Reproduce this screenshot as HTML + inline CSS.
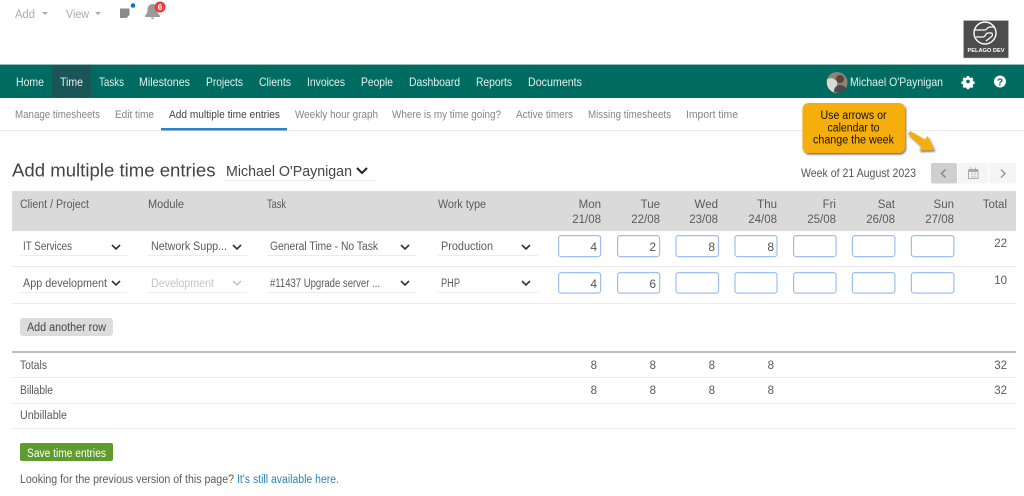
<!DOCTYPE html>
<html><head><meta charset="utf-8"><title>Add multiple time entries</title>
<style>
html,body{margin:0;padding:0;background:#fff;width:1024px;height:496px;overflow:hidden}
svg{display:block;filter:blur(.35px)}
text{font-family:"Liberation Sans",sans-serif;font-size:11.5px;fill:#5a5a5a}
.n{fill:#e4f0ee;font-size:12px}
.s{fill:#858585;font-size:11px}
.r{text-anchor:end}
.f{fill:#fff;stroke:#9cc0f0;stroke-width:1.2}
.c{fill:none;stroke:#333;stroke-width:1.6}
.u{stroke:#ececec;stroke-width:1}
.v{fill:#555;font-size:12px;text-anchor:end}
</style></head><body>
<svg width="1024" height="496" viewBox="0 0 1024 496" xmlns="http://www.w3.org/2000/svg">
<defs><filter id="sh" x="-20%" y="-20%" width="140%" height="140%"><feDropShadow dx="1" dy="1.5" stdDeviation="1" flood-color="#000" flood-opacity=".6"/></filter></defs>
<rect width="1024" height="496" fill="#fff"/>

<!-- top bar -->
<text x="15" y="18" textLength="20" lengthAdjust="spacingAndGlyphs" style="fill:#aaa">Add</text>
<path d="M42 12h6l-3 3z" fill="#aaa"/>
<text x="66" y="18" textLength="23" lengthAdjust="spacingAndGlyphs" style="fill:#aaa">View</text>
<path d="M95 12h6l-3 3z" fill="#aaa"/>
<path d="M120 8.500h9.500v6.500l-3 3h-6.500z" fill="#8a8a8a"/>
<circle cx="133" cy="5.500" r="2.300" fill="#0b74c4"/>
<path d="M152.500 4c3.500 0 5 3 5 6 0 3 1 4.500 2.500 5.500v1.500h-15v-1.500c1.500-1 2.500-2.500 2.500-5.500 0-3 1.500-6 5-6zM150.500 17.500h4l-2 2z" fill="#9a9a9a"/>
<circle cx="160" cy="7" r="5.500" fill="#ef3b3b"/>
<text x="160" y="10" text-anchor="middle" style="fill:#fff;font-size:8.500px;font-weight:bold">6</text>

<!-- logo -->
<rect x="963.500" y="20.500" width="45" height="37.500" fill="#4d4d4d" stroke="#bbb" stroke-width=".6"/>
<circle cx="985" cy="33" r="11" fill="none" stroke="#fff" stroke-width="1.400"/>
<path d="M975 30h10c2 0 2-3 5-3h5M976 37h7c3 0 2-4 5-4h3c2 0 2 3 0 4l-5 4" fill="none" stroke="#fff" stroke-width="1.200"/>
<text x="986" y="52" text-anchor="middle" textLength="37" lengthAdjust="spacingAndGlyphs" style="fill:#fff;font-size:5px;font-weight:bold">PELAGO DEV</text>

<!-- nav -->
<rect x="0" y="64" width="1024" height="1" fill="#8fbdb6"/>
<rect x="0" y="65" width="1024" height="33" fill="#006b60"/>
<rect x="52" y="65" width="39" height="32.500" fill="#1a5558"/>
<text class="n" x="16" y="86" textLength="28" lengthAdjust="spacingAndGlyphs">Home</text>
<text class="n" x="60" y="86" textLength="23" lengthAdjust="spacingAndGlyphs">Time</text>
<text class="n" x="99" y="86" textLength="25" lengthAdjust="spacingAndGlyphs">Tasks</text>
<text class="n" x="139" y="86" textLength="51" lengthAdjust="spacingAndGlyphs">Milestones</text>
<text class="n" x="206" y="86" textLength="37" lengthAdjust="spacingAndGlyphs">Projects</text>
<text class="n" x="259" y="86" textLength="32" lengthAdjust="spacingAndGlyphs">Clients</text>
<text class="n" x="307" y="86" textLength="38" lengthAdjust="spacingAndGlyphs">Invoices</text>
<text class="n" x="361" y="86" textLength="32" lengthAdjust="spacingAndGlyphs">People</text>
<text class="n" x="409" y="86" textLength="51" lengthAdjust="spacingAndGlyphs">Dashboard</text>
<text class="n" x="476" y="86" textLength="36" lengthAdjust="spacingAndGlyphs">Reports</text>
<text class="n" x="528" y="86" textLength="54" lengthAdjust="spacingAndGlyphs">Documents</text>

<circle cx="837" cy="82.500" r="10.500" fill="#8d8479"/>
<path d="M827 84a10.500 10.500 0 0 0 10 9v-12l-5-3-5 1z" fill="#d8d8d4"/>
<circle cx="840" cy="79" r="4" fill="#5c4436"/>
<path d="M834 92c0-5 3-7 6-7s6 2 6 4a10.500 10.500 0 0 1-12 3z" fill="#4c4a50"/>
<text class="n" x="850" y="86" textLength="93" lengthAdjust="spacingAndGlyphs">Michael O'Paynigan</text>

<g transform="translate(968 81.500) scale(.78)"><path d="M-1.500-7h3l.4 1.900 1.400.6 1.600-1 2.100 2.100-1 1.600.6 1.400 1.900.4v3l-1.900.4-.6 1.400 1 1.600-2.100 2.100-1.600-1-1.400.6-.4 1.900h-3l-.4-1.900-1.400-.6-1.600 1-2.100-2.100 1-1.600-.6-1.400-1.900-.4v-3l1.900-.4.6-1.400-1-1.600 2.100-2.100 1.600 1 1.400-.6z" fill="#fff"/><circle r="2.300" fill="#006b60"/></g>
<circle cx="1000" cy="81.500" r="6" fill="#fff"/>
<text x="1000" y="85.500" text-anchor="middle" style="fill:#006b60;font-size:10px;font-weight:bold">?</text>

<!-- sub nav -->
<rect x="0" y="130" width="1024" height="1" fill="#ececec"/>
<text class="s" x="15" y="118" textLength="85" lengthAdjust="spacingAndGlyphs">Manage timesheets</text>
<text class="s" x="115" y="118" textLength="39" lengthAdjust="spacingAndGlyphs">Edit time</text>
<text class="s" x="169" y="118" textLength="111" lengthAdjust="spacingAndGlyphs" style="fill:#444">Add multiple time entries</text>
<text class="s" x="295" y="118" textLength="83" lengthAdjust="spacingAndGlyphs">Weekly hour graph</text>
<text class="s" x="392" y="118" textLength="109" lengthAdjust="spacingAndGlyphs">Where is my time going?</text>
<text class="s" x="516" y="118" textLength="57" lengthAdjust="spacingAndGlyphs">Active timers</text>
<text class="s" x="588" y="118" textLength="83" lengthAdjust="spacingAndGlyphs">Missing timesheets</text>
<text class="s" x="686" y="118" textLength="52" lengthAdjust="spacingAndGlyphs">Import time</text>
<rect x="161" y="128" width="126" height="2.500" fill="#2a85c0"/>

<!-- callout -->
<rect x="802.500" y="103" width="102.500" height="50" rx="6" fill="#f6ae0a" filter="url(#sh)"/>
<path d="M908 134l2-3 15 8.500 2.500-3.500 7 14-15.500 .5 2.500-4z" fill="#f6ae0a" filter="url(#sh)"/>
<text x="853.500" y="119" text-anchor="middle" textLength="66" lengthAdjust="spacingAndGlyphs" style="fill:#111">Use arrows or</text>
<text x="853.500" y="131.500" text-anchor="middle" textLength="52" lengthAdjust="spacingAndGlyphs" style="fill:#111">calendar to</text>
<text x="853.500" y="143.500" text-anchor="middle" textLength="81" lengthAdjust="spacingAndGlyphs" style="fill:#111">change the week</text>

<!-- title row -->
<text x="12" y="176.500" textLength="203.500" lengthAdjust="spacingAndGlyphs" style="font-size:18.500px;fill:#444">Add multiple time entries</text>
<text x="226" y="176" textLength="126" lengthAdjust="spacingAndGlyphs" style="font-size:14.500px;fill:#444">Michael O'Paynigan</text>
<path d="M357 168l5 5 5-5" fill="none" stroke="#222" stroke-width="2"/>
<path class="u" d="M223 180.500h154"/>

<text x="801" y="177" textLength="115" lengthAdjust="spacingAndGlyphs" style="font-size:12px;fill:#555">Week of 21 August 2023</text>
<rect x="931" y="163" width="26" height="20.500" rx="2" fill="#cfcfcf"/>
<rect x="958" y="163" width="30" height="20.500" rx="2" fill="#f5f5f5"/>
<rect x="989" y="163" width="27" height="20.500" rx="2" fill="#f5f5f5"/>
<path d="M945.500 169.500l-4 4 4 4" fill="none" stroke="#888" stroke-width="1.500"/>
<path d="M1001 169.500l4 4-4 4" fill="none" stroke="#999" stroke-width="1.500"/>
<rect x="968.500" y="170" width="9.500" height="8.500" fill="none" stroke="#aaa" stroke-width="1"/>
<rect x="968.500" y="169" width="9.500" height="3" fill="#aaa"/>
<path d="M971 167.500v2M975.500 167.500v2" stroke="#aaa" stroke-width="1"/>
<path d="M970.500 174h6M970.500 176.500h6M972 172v6M975 172v6" stroke="#bbb" stroke-width=".6"/>

<!-- table header -->
<rect x="12" y="191" width="1004" height="40" fill="#dadada"/>
<text x="20" y="208" textLength="69" lengthAdjust="spacingAndGlyphs">Client / Project</text>
<text x="148" y="208" textLength="36" lengthAdjust="spacingAndGlyphs">Module</text>
<text x="267" y="208" textLength="19" lengthAdjust="spacingAndGlyphs">Task</text>
<text x="438" y="208" textLength="48" lengthAdjust="spacingAndGlyphs">Work type</text>
<text class="r" x="601" y="208">Mon</text><text class="r" x="601" y="223">21/08</text>
<text class="r" x="660" y="208">Tue</text><text class="r" x="660" y="223">22/08</text>
<text class="r" x="718" y="208">Wed</text><text class="r" x="718" y="223">23/08</text>
<text class="r" x="777" y="208">Thu</text><text class="r" x="777" y="223">24/08</text>
<text class="r" x="836" y="208">Fri</text><text class="r" x="836" y="223">25/08</text>
<text class="r" x="895" y="208">Sat</text><text class="r" x="895" y="223">26/08</text>
<text class="r" x="954" y="208">Sun</text><text class="r" x="954" y="223">27/08</text>
<text class="r" x="1007" y="208">Total</text>

<!-- row 1 -->
<text x="23" y="250" textLength="49" lengthAdjust="spacingAndGlyphs">IT Services</text>
<text x="151" y="250" textLength="76" lengthAdjust="spacingAndGlyphs">Network Supp...</text>
<text x="270" y="250" textLength="108" lengthAdjust="spacingAndGlyphs">General Time - No Task</text>
<text x="441" y="250" textLength="52" lengthAdjust="spacingAndGlyphs">Production</text>
<path class="c" d="M112 245l4 4 4-4M233 245l4 4 4-4M401 245l4 4 4-4M522 245l4 4 4-4"/>
<path class="u" d="M20 255.500h107M148 255.500h99M267 255.500h149M438 255.500h100M12 266.500h1004"/>
<rect class="f" x="558.600" y="235.600" width="42" height="21" rx="2.500"/>
<rect class="f" x="617.600" y="235.600" width="42" height="21" rx="2.500"/>
<rect class="f" x="676" y="235.600" width="42.500" height="21" rx="2.500"/>
<rect class="f" x="735" y="235.600" width="42" height="21" rx="2.500"/>
<rect class="f" x="793.600" y="235.600" width="42.500" height="21" rx="2.500"/>
<rect class="f" x="852.400" y="235.600" width="42.500" height="21" rx="2.500"/>
<rect class="f" x="911.400" y="235.600" width="42.500" height="21" rx="2.500"/>
<text class="v" x="597" y="251">4</text>
<text class="v" x="656" y="251">2</text>
<text class="v" x="715" y="251">8</text>
<text class="v" x="774" y="251">8</text>
<text class="r" x="1007" y="247">22</text>

<!-- row 2 -->
<text x="23" y="287" textLength="84" lengthAdjust="spacingAndGlyphs">App development</text>
<text x="151" y="287" textLength="63" lengthAdjust="spacingAndGlyphs" style="fill:#c4c4c4">Development</text>
<text x="270" y="287" textLength="110" lengthAdjust="spacingAndGlyphs">#11437 Upgrade server ...</text>
<text x="441" y="287" textLength="19" lengthAdjust="spacingAndGlyphs">PHP</text>
<path class="c" d="M112 281l4 4 4-4M401 281l4 4 4-4M522 281l4 4 4-4"/>
<path d="M233 281l4 4 4-4" fill="none" stroke="#bbb" stroke-width="1.300"/>
<path class="u" d="M20 292.500h107M148 292.500h99M267 292.500h149M438 292.500h100M12 303.500h1004"/>
<rect class="f" x="558.600" y="272.600" width="42" height="20.500" rx="2.500"/>
<rect class="f" x="617.600" y="272.600" width="42" height="20.500" rx="2.500"/>
<rect class="f" x="676" y="272.600" width="42.500" height="20.500" rx="2.500"/>
<rect class="f" x="735" y="272.600" width="42" height="20.500" rx="2.500"/>
<rect class="f" x="793.600" y="272.600" width="42.500" height="20.500" rx="2.500"/>
<rect class="f" x="852.400" y="272.600" width="42.500" height="20.500" rx="2.500"/>
<rect class="f" x="911.400" y="272.600" width="42.500" height="20.500" rx="2.500"/>
<text class="v" x="597" y="288">4</text>
<text class="v" x="656" y="288">6</text>
<text class="r" x="1007" y="284">10</text>

<!-- add row -->
<rect x="20" y="318" width="93" height="18" rx="3" fill="#dcdcdc"/>
<text x="27" y="331" textLength="79" lengthAdjust="spacingAndGlyphs" style="fill:#444">Add another row</text>

<!-- totals -->
<rect x="12" y="351" width="1004" height="2" fill="#bdbdbd"/>
<text x="20" y="369" textLength="27" lengthAdjust="spacingAndGlyphs">Totals</text>
<text class="r" x="597" y="369">8</text><text class="r" x="656" y="369">8</text><text class="r" x="715" y="369">8</text><text class="r" x="774" y="369">8</text><text class="r" x="1007" y="369">32</text>
<path class="u" d="M12 377.500h1004"/>
<text x="20" y="394" textLength="33" lengthAdjust="spacingAndGlyphs">Billable</text>
<text class="r" x="597" y="394">8</text><text class="r" x="656" y="394">8</text><text class="r" x="715" y="394">8</text><text class="r" x="774" y="394">8</text><text class="r" x="1007" y="394">32</text>
<path class="u" d="M12 403.500h1004"/>
<text x="20" y="419" textLength="47" lengthAdjust="spacingAndGlyphs">Unbillable</text>
<path class="u" d="M12 428.500h1004"/>

<!-- footer -->
<rect x="20" y="443" width="93" height="18" rx="2" fill="#5f9b2e"/>
<text x="27" y="457" textLength="79" lengthAdjust="spacingAndGlyphs" style="fill:#fff">Save time entries</text>
<text x="20" y="483" textLength="214" lengthAdjust="spacingAndGlyphs">Looking for the previous version of this page?</text>
<text x="237" y="483" textLength="102" lengthAdjust="spacingAndGlyphs" style="fill:#2a85c0">It's still available here.</text>
</svg>
</body></html>
